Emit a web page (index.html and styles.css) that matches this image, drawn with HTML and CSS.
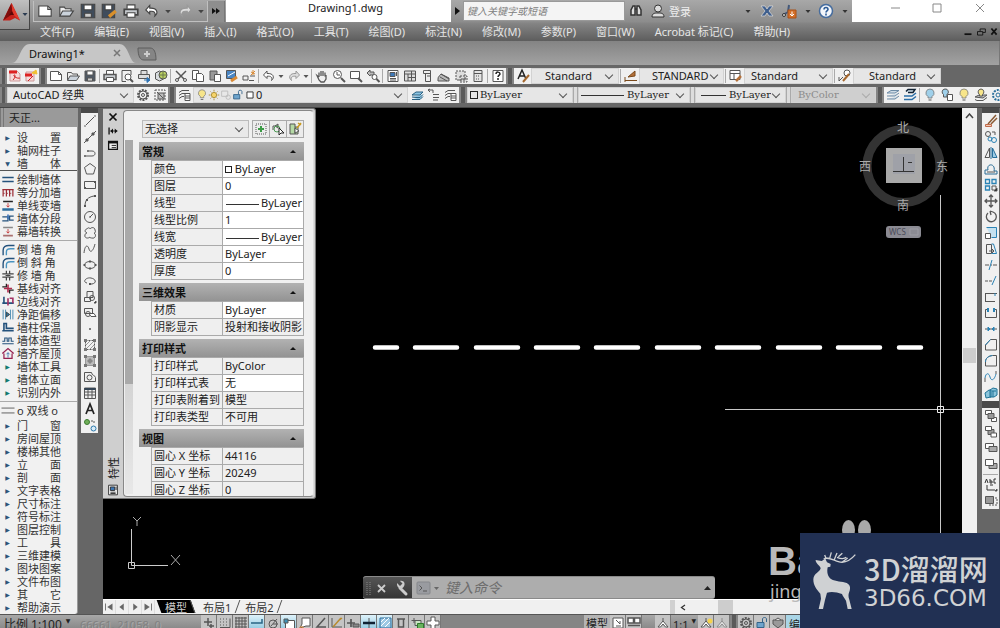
FILE: index.html
```html
<!DOCTYPE html>
<html lang="zh-CN">
<head>
<meta charset="utf-8">
<title>Drawing1.dwg</title>
<link rel="stylesheet" href="styles.css">
</head>
<body>
<header class="head">
  <button class="app" aria-label="应用程序菜单">
    <svg width="30" height="30" viewBox="0 0 30 30"><path d="M11.500 3 20 20.500 15 18 10 20.500 3 20.500z" fill="#c3221c"/><path d="M11.500 3 12.500 14 3 20.500z" fill="#7e0d0c"/><path d="M11.500 3 20 20.500 12.500 14z" fill="#e23a2c"/><path d="M9 15h5l-2-4z" fill="#5d0808"/><path d="M22.500 13h5l-2.500 3z" fill="#2a3b50"/></svg>
  </button>
  <div class="titlebar">
    <div class="quick" data-icons="new open saveD saveAs print undo caret redo caret" data-size="large"></div>
    <button class="more" aria-label="更多"><svg width="10" height="8" viewBox="0 0 10 8"><path d="M1 1l4 3-4 3zM5 1l4 3-4 3z" fill="#111"/></svg></button>
    <div class="title">Drawing1.dwg</div>
    <button class="go" aria-label="展开"><svg width="5" height="8" viewBox="0 0 5 8"><path d="M0 0l5 4-5 4z" fill="#111"/></svg></button>
    <input class="search" type="text" placeholder="键入关键字或短语" aria-label="搜索">
    <div class="infos" data-icons="binoc user"></div>
    <a class="login" href="#">登录</a>
    <div class="infos" data-icons="caret exchange cloud caret helpRound caret"></div>
    <div class="win" data-icons="wmin wmax wclose"></div>
  </div>
  <nav class="menu">
    <button>文件(F)</button><button>编辑(E)</button><button>视图(V)</button><button>插入(I)</button><button>格式(O)</button><button>工具(T)</button><button>绘图(D)</button><button>标注(N)</button><button>修改(M)</button><button>参数(P)</button><button>窗口(W)</button><button>Acrobat 标记(C)</button><button>帮助(H)</button>
    <span class="docwin" data-icons="dmin dmax dclose" data-size="slim"></span>
  </nav>
</header>
<div class="tabs">
  <button class="tab">
    <svg class="tabshape" viewBox="0 0 126 20" preserveAspectRatio="none"><path d="M0 20C8 20 8 1 18 1H109C119 1 119 20 126 20z" fill="#c6c6c6"/></svg>
    <span>Drawing1*</span>
    <svg width="8" height="8" viewBox="0 0 8 8"><path d="M1 1l6 6M7 1L1 7" stroke="#777" stroke-width="1.500"/></svg>
  </button>
  <button class="plus" aria-label="新图形"><svg width="20" height="14" viewBox="0 0 20 14"><path d="M1 1h12c4 0 6 4 6 12H7C3 13 1 9 1 1z" fill="#858585" stroke="#5d5d5d"/><path d="M10 4v6M7 7h6" stroke="#ccc" stroke-width="2"/></svg></button>
</div>
<div class="bars">
  <div class="row">
    <i class="grip"></i>
    <div class="bar pdfs" data-icons="pdf pdf2"></div>
    <i class="grip"></i>
    <div class="bar" data-icons="new open save | print preview publish globe | cut copy paste match block | undo caret redo caret | pan zoomRt zoomWin zoomPrev | props design palettes sheet markup calc | help"></div>
    <i class="grip"></i>
    <div class="bar" data-icons="textA"></div>
    <label class="combo c-text"><select aria-label="文字样式"><option>Standard</option></select></label>
    <div class="bar" data-icons="| dim"></div>
    <label class="combo c-dim"><select aria-label="标注样式"><option>STANDARD</option></select></label>
    <div class="bar" data-icons="| tableS"></div>
    <label class="combo c-tab"><select aria-label="表格样式"><option>Standard</option></select></label>
    <div class="bar" data-icons="| leader"></div>
    <label class="combo c-lead"><select aria-label="多重引线样式"><option>Standard</option></select></label>
  </div>
  <div class="row">
    <i class="grip"></i>
    <label class="combo c-ws"><select aria-label="工作空间"><option>AutoCAD 经典</option></select></label>
    <div class="bar" data-icons="gear wsave"></div>
    <i class="grip"></i>
    <div class="bar" data-icons="layers"></div>
    <label class="combo c-layer"><span class="state" data-icons="bulb sun freeze lock square" data-size="slim"></span><select aria-label="图层"><option>0</option></select></label>
    <div class="bar layerbtns" data-icons="layCur layPrev layers"></div>
    <i class="grip"></i>
    <label class="combo serif c-color"><i class="box"></i><select aria-label="颜色"><option>ByLayer</option></select></label>
    <i class="gap"></i>
    <label class="combo serif c-lt"><i class="rule"></i><select aria-label="线型"><option>ByLayer</option></select></label>
    <i class="gap"></i>
    <label class="combo serif c-lw"><i class="rule short"></i><select aria-label="线宽"><option>ByLayer</option></select></label>
    <i class="gap"></i>
    <label class="combo serif c-plot"><select aria-label="打印样式" disabled><option>ByColor</option></select></label>
    <i class="grip"></i>
    <div class="bar rest" data-icons="layStack laySwap | bulbB bulbBox bulb bulbLay gearB"></div>
  </div>
</div>
<main class="main">
  <aside class="side">
    <h2>天正...</h2>
    <ul>
      <li><b>▶</b><span>设<i></i>置</span></li><li><b>▶</b><span>轴网柱子</span></li><li><b>▼</b><span>墙<i></i>体</span></li>
    </ul>
    <ul class="icons">
      <li data-glyph="tWall"><span>绘制墙体</span></li><li data-glyph="tDiv"><span>等分加墙</span></li><li data-glyph="tLine"><span>单线变墙</span></li><li data-glyph="tSeg"><span>墙体分段</span></li><li data-glyph="tCurt"><span>幕墙转换</span></li>
    </ul>
    <ul class="icons">
      <li data-glyph="tArc"><span>倒 墙 角</span></li><li data-glyph="tArc"><span>倒 斜 角</span></li><li data-glyph="tCross"><span>修 墙 角</span></li><li data-glyph="tCrossR"><span>基线对齐</span></li><li data-glyph="tEdge"><span>边线对齐</span></li><li data-glyph="tGap"><span>净距偏移</span></li><li data-glyph="tCol"><span>墙柱保温</span></li><li data-glyph="tShape"><span>墙体造型</span></li><li data-glyph="tHouse"><span>墙齐屋顶</span></li>
      <li class="teal"><b>▶</b><span>墙体工具</span></li><li class="teal"><b>▶</b><span>墙体立面</span></li><li class="teal"><b>▶</b><span>识别内外</span></li>
    </ul>
    <ul class="dbl">
      <li data-glyph="tDouble"><span>o 双线 o</span></li>
    </ul>
    <ul class="plain">
      <li><b>▶</b><span>门<i></i>窗</span></li><li><b>▶</b><span>房间屋顶</span></li><li><b>▶</b><span>楼梯其他</span></li><li><b>▶</b><span>立<i></i>面</span></li><li><b>▶</b><span>剖<i></i>面</span></li><li><b>▶</b><span>文字表格</span></li><li><b>▶</b><span>尺寸标注</span></li><li><b>▶</b><span>符号标注</span></li><li><b>▶</b><span>图层控制</span></li><li><b>▶</b><span>工<i></i>具</span></li><li><b>▶</b><span>三维建模</span></li><li><b>▶</b><span>图块图案</span></li><li><b>▶</b><span>文件布图</span></li><li><b>▶</b><span>其<i></i>它</span></li><li><b>▶</b><span>帮助演示</span></li>
    </ul>
  </aside>
  <div class="vbar draw" data-icons="line cline pline polygon rect arc circle revcloud spline ellipse earc insert mkblock point hatch grad region table mtext addsel"></div>
  <section class="work">
    <div class="view">
      <div class="canvas">
        <svg class="drawing" width="859" height="491" viewBox="103 108 859 491">
          <path d="M375 347.500h22M415 347.500h42M476 347.500h42M536 347.500h42M596 347.500h42M657 347.500h42M717 347.500h42M778 347.500h42M838 347.500h42M899 347.500h22" stroke="#fff" stroke-width="4.500" stroke-linecap="round"/>
          <path d="M725 409.500H962M940.500 195V540" stroke="#c8c8c8"/>
          <path d="M937.500 406.500h6v6h-6z" stroke="#eee" fill="none"/>
          <path d="M131.500 529V565.500H168M128.500 562.500h6v6h-6z" stroke="#ccc" fill="none"/>
          <path d="M133 517l4 4 4-4M137 521v5M171 555l9 10M180 555l-9 10" stroke="#aaa" fill="none"/>
          <circle cx="903.500" cy="166" r="36.500" stroke="#333" stroke-width="9" fill="none"/>
          <path d="M886 148h36v35h-36z" fill="#a9a9a9"/><path d="M893 154h22v20h-22z" fill="#9fa1a8"/>
          <path d="M903.500 157v15M893 171.500h21M908 162.500h4" stroke="#333" fill="none"/>
          <rect x="886" y="226" width="35" height="12" rx="3" fill="#8b8b93"/>
          <path d="M910 229h8v6h-8z" fill="none" stroke="#9c9ca4"/>
          <g class="compass"><text x="903" y="132">北</text><text x="903" y="210">南</text><text x="865" y="171">西</text><text x="942" y="171">东</text></g>
          <text x="889" y="235" class="wcs">WCS</text>
        </svg>
        <section class="palette">
          <div class="strip">
            <span data-glyph="px"></span><span data-glyph="pauto"></span><span data-glyph="pmenu"></span>
            <em>特性</em><span data-glyph="props"></span>
          </div>
          <div class="pbody">
            <div class="pscroll"></div>
            <div class="pmain">
              <div class="pick">
                <label class="combo"><select aria-label="选择"><option>无选择</option></select></label>
                <span class="pbtns" data-icons="pAdd pSel pQuick"></span>
              </div>
              <button class="sec">常规</button>
              <table>
                <tr><th>颜色</th><td class="w"><i class="box"></i> ByLayer</td></tr>
                <tr><th>图层</th><td class="w">0</td></tr>
                <tr><th>线型</th><td class="w"><i class="rule"></i>ByLayer</td></tr>
                <tr><th>线型比例</th><td class="w">1</td></tr>
                <tr><th>线宽</th><td class="w"><i class="rule"></i>ByLayer</td></tr>
                <tr><th>透明度</th><td class="w">ByLayer</td></tr>
                <tr><th>厚度</th><td class="w">0</td></tr>
              </table>
              <button class="sec">三维效果</button>
              <table>
                <tr><th>材质</th><td class="w">ByLayer</td></tr>
                <tr><th>阴影显示</th><td>投射和接收阴影</td></tr>
              </table>
              <button class="sec">打印样式</button>
              <table>
                <tr><th>打印样式</th><td>ByColor</td></tr>
                <tr><th>打印样式表</th><td class="w">无</td></tr>
                <tr><th>打印表附着到</th><td>模型</td></tr>
                <tr><th>打印表类型</th><td>不可用</td></tr>
              </table>
              <button class="sec">视图</button>
              <table>
                <tr><th>圆心 X 坐标</th><td>44116</td></tr>
                <tr><th>圆心 Y 坐标</th><td>20249</td></tr>
                <tr><th>圆心 Z 坐标</th><td>0</td></tr>
              </table>
            </div>
          </div>
        </section>
        <form class="cmd">
          <span class="cmdl"><svg width="48" height="22" viewBox="0 0 48 22"><path d="M4 5v13M7 5v13" stroke="#888" stroke-dasharray="1 1"/><path d="M15 8l7 7M22 8l-7 7" stroke="#ccc" stroke-width="1.800"/><path d="M37 11l6 6" stroke="#ccc" stroke-width="3" stroke-linecap="round"/><path d="M34 6l3 3 2.500-2.500L37 4c4-1 6 3 3.500 6s-7 1-6.500-4z" fill="#ccc"/></svg></span>
          <span class="cmdp"><svg width="24" height="16" viewBox="0 0 24 16"><rect x="1" y="2" width="13" height="12" rx="1" fill="#999ba0" stroke="#85878b"/><path d="M3.500 5.500L6 8l-2.500 2.500M7 11h4" stroke="#555" fill="none"/><path d="M18 7h5l-2.500 3z" fill="#666"/></svg></span>
          <input type="text" placeholder="键入命令" aria-label="命令">
          <svg class="up" width="7" height="4" viewBox="0 0 7 4"><path d="M0 4l3.500-4L7 4z" fill="#222"/></svg>
        </form>
      </div>
      <div class="vscroll"><svg width="9" height="6" viewBox="0 0 9 6"><path d="M1 5l3.500-4L8 5" stroke="#444" stroke-width="1.500" fill="none"/></svg><i></i></div>
    </div>
    <div class="layouts">
      <span class="nav" data-icons="first prev next last" data-size="slim"></span>
      <button class="lt on">模型</button><button class="lt">布局1</button><button class="lt">布局2</button>
      <div class="hscroll"><svg width="6" height="7" viewBox="0 0 6 7"><path d="M5 1L1.500 3.500 5 6" stroke="#333" stroke-width="1.300" fill="none"/></svg><i></i></div>
    </div>
  </section>
  <div class="right">
    <div class="vbar" data-icons="erase copyO mirror offset array move rotate scale stretch trim extend brkpt brk join chamfer fillet blend explode"></div>
    <div class="vbar order" data-icons="front back above under - textFront hatchBack"></div>
  </div>
</main>
<footer class="status">
  <div class="ratio"><span>比例 1:100</span><b>▼</b></div>
  <span class="coords">66661, 21058, 0</span>
  <div class="sb" data-icons="sInfer sSnap sGrid sOrtho sPolar sOsnap s3d sTrack sUcs sDyn sLwt sTpy sQp sSc sPlus"></div>
  <span class="sp"></span>
  <button class="model">模型</button>
  <div class="sb" data-icons="sLay sView"></div>
  <div class="sb scales" data-icons="sAnno"></div>
  <span class="one">1:1<b>▼</b></span>
  <div class="sb" data-icons="sAnnoY sAnnoG"></div>
  <i class="grip"></i>
  <div class="sb" data-icons="gear lock sShield"></div>
  <span class="edit">编辑</span>
</footer>
<div class="baidu"><i></i><i></i><strong>Ba</strong><span>jing</span></div>
<div class="mark">
  <svg width="45" height="60" viewBox="455 150 135 180"><path d="M466 180L484 183 495 176 500 187 511 192 510 200 502 202C499 217 502 230 512 237 526 246 546 243 559 249 569 254 571 262 568 272 564 282 563 287 567 299L574 327H562L557 302C552 294 547 288 545 282 530 277 515 274 500 278L494 300 488 327H475L482 296 480 281C468 268 459 256 459 238 460 220 479 216 481 205 479 196 470 194 466 183z" fill="#cfd1d3"/><path d="M490 178C500 168 518 180 534 185 554 191 573 178 585 164M508 175L513 157M521 181L530 159M497 175L493 165M530 172C540 176 550 178 558 172M534 170L546 160M545 187L562 174" stroke="#cfd1d3" stroke-width="4" fill="none"/></svg>
  <div><strong>3D溜溜网</strong><span>3D66.COM</span></div>
</div>
<script src="app.js"></script>
</body>
</html>
```

FILE: styles.css
```css
* { box-sizing: border-box; }
body { margin: 0; height: 100vh; overflow: hidden; display: flex; flex-direction: column; background: #666; color: #333; font: 11px/13px "Noto Sans", "Noto Sans CJK SC", sans-serif; }
button, input, select { font: inherit; color: inherit; border: 0; padding: 0; margin: 0; background: none; border-radius: 0; }
svg { display: block; flex: none; }
.ib { width: 17px; height: 16px; flex: none; display: flex; align-items: center; justify-content: center; color: #565656; overflow: hidden; }
.ib.narrow { width: 8px; }
.sep { display: block; flex: none; width: 1px; height: 14px; margin: 0 1px; background: #aaa; }

.head { display: grid; grid-template-columns: 30px minmax(0, 1fr); grid-template-rows: 22px 19px; background: linear-gradient(#a8a8a8, #8c8c8c 22px, #858585 23px, #5d5d5d 41px); }
.app { grid-row: 1 / 3; height: 30px; align-self: start; background: linear-gradient(#c0c0c0, #8f8f8f); border: solid #444; border-width: 0 1px 1px 0; }
.titlebar { display: flex; align-items: center; min-width: 0; }
.quick { display: flex; align-items: center; height: 21px; margin-left: 3px; border: 1px solid #c0c0c0; border-top: 0; width: 175px; padding: 0 1px; justify-content: space-between; }
.quick .ib { width: 20px; height: 20px; color: #444; }
.quick .ib.narrow { width: 10px; }
.more { width: 17px; height: 21px; display: grid; place-items: center; background: #8e8e8e; border-right: 1px solid #777; }
.title { flex: 1; align-self: stretch; background: #fff; color: #222; text-align: center; line-height: 16px; padding-left: 14px; margin-left: 1px; }
.go { width: 12px; display: grid; place-items: center; }
.search { width: 162px; height: 20px; background: #f4f4f4; border: 1px solid #999; font-style: italic; font-size: 10px; padding: 0 3px; }
.search::placeholder { color: #808080; opacity: 1; }
.infos { display: flex; align-items: center; }
.infos .ib { width: 22px; height: 20px; color: #333; }
.infos .ib.narrow { width: 14px; }
.login { color: #eee; text-decoration: none; width: 72px; }
.login + .infos { width: 111px; justify-content: space-between; }
.win { align-self: stretch; width: 148px; background: #fff; display: flex; justify-content: space-between; padding: 0 12px 6px 34px; align-items: center; }
.win .ib { color: #888; }
.menu { display: flex; gap: 20px; padding-left: 10px; align-items: center; color: #e6e6e6; white-space: nowrap; }
.docwin { margin-left: auto; display: flex; }
.docwin .ib { width: 13px; color: #111; }

.tabs { display: flex; height: 24px; align-items: flex-end; padding: 0 0 2px 12px; background: linear-gradient(#848484, #a2a2a2); border-right: 1px solid #777; }
.tab { position: relative; width: 124px; height: 20px; display: flex; align-items: center; justify-content: space-between; padding: 0 15px 0 17px; color: #111; }
.tab > * { position: relative; }
.tab .tabshape { position: absolute; inset: 0; width: 100%; height: 100%; }
.plus { height: 18px; margin-left: 1px; }

.bars { background: #676767; padding: 3px 0 4px; display: flex; flex-direction: column; gap: 3px; border-bottom: 1px solid #444; }
.row { display: flex; height: 16px; }
.grip { flex: none; width: 8px; background: #5a5a5a; border: solid #858585; border-width: 0 2px; }
.row > .grip:first-child { width: 7px; }
.bar { display: flex; align-items: center; background: #f0f0f0; flex: none; }
.pdfs .ib { width: 16px; }
.gap { flex: none; width: 5px; background: #ddd; border: solid #aaa; border-width: 0 1px; }
.combo { position: relative; display: flex; align-items: center; background: #e6e6e6; border: 1px solid #d2d2d2; flex: none; overflow: hidden; color: #222; }
.combo select { appearance: none; flex: 1; min-width: 0; padding-right: 14px; height: 14px; line-height: 14px; opacity: 1; }
.combo::after { content: ""; position: absolute; right: 6px; top: 3px; width: 5px; height: 5px; border: solid #555; border-width: 0 1px 1px 0; transform: rotate(45deg); }
.c-text { width: 88px; padding-left: 13px; }
.c-dim { width: 85px; padding-left: 12px; }
.c-tab { width: 89px; padding-left: 6px; }
.c-lead { width: 88px; padding-left: 15px; }
.c-ws { width: 127px; padding-left: 5px; }
.c-layer { width: 215px; }
.c-layer .state { display: flex; padding-left: 2px; }
.c-layer .ib { width: 12px; }
.serif { font-family: "DejaVu Serif", serif; font-size: 10px; }
.c-color { width: 106px; padding-left: 2px; }
.box { flex: none; display: inline-block; width: 8px; height: 8px; border: 1px solid #222; margin-right: 2px; }
.rule { flex: none; display: inline-block; height: 1px; width: 43px; background: #333; margin-right: 3px; }
.rule.short { width: 25px; }
.c-lt { width: 112px; padding-left: 2px; }
.c-lw { width: 91px; padding-left: 5px; }
.c-plot { width: 85px; padding-left: 6px; color: #8b8b8b; background: #cfcfcf; }
.c-plot::after { border-color: #aaa; }
.rest { flex: 1; overflow: hidden; min-width: 0; }

.main { flex: 1; min-height: 0; display: flex; }
.side { width: 78px; flex: none; background: #f1f1f1; border-radius: 0 0 3px 0; overflow: hidden; border-right: 1px solid #999; }
.side h2 { margin: 0; font: inherit; height: 19px; line-height: 19px; background: #9a9a9a; padding-left: 5px; border-left: 4px double #777; color: #222; }
.side ul { list-style: none; margin: 0; padding: 2px 0; border-bottom: 1px solid #aaa; }
.side h2 + ul { padding: 4px 0 0; border-color: #555; }
.side .plain, .side .dbl { border: 0; }
.side .plain { padding: 0; }
.side li { display: flex; align-items: center; height: 13px; gap: 1px; white-space: nowrap; }
.side li svg { width: 16px; height: 13px; }
.side b { width: 16px; text-align: center; font: 6px/13px "DejaVu Sans", sans-serif; color: #2c5579; padding-right: 1px; }
.side .teal b { color: #127a70; }
.side span { width: 46px; display: flex; white-space: pre; }
.side span i { flex: 1; max-width: 22px; }

.vbar { width: 17px; flex: none; align-self: flex-start; background: #f0f0f0; border-top: 5px solid #4a4a4a; }
.vbar .ib { width: 17px; }
.vbar .sep { width: 15px; height: 1px; margin: 2px 1px; }
.draw { margin: 0 5px 0 3px; }
.right { margin-left: 5px; width: 18px; flex: none; }
.right .order { border-top-width: 7px; }
.work { flex: 1; min-width: 0; display: flex; flex-direction: column; }
.view { flex: 1; min-height: 0; display: flex; }
.canvas { flex: 1; min-width: 0; background: #000; position: relative; overflow: hidden; }
.compass { font: 12px "Noto Sans CJK SC", sans-serif; fill: #aaa; text-anchor: middle; }
.wcs { font: 8px "Noto Sans", sans-serif; fill: #4a4a58; }
.vscroll { width: 15px; background: #f0f0f0; display: flex; flex-direction: column; align-items: center; padding-top: 5px; }
.vscroll i { width: 13px; height: 15px; background: #cdcdcd; margin-top: 229px; }

.palette { position: absolute; left: 0; top: 0; width: 213px; height: 391px; background: #cfcfcf; border: solid #777; border-width: 1px 1px 1px 0; display: flex; border-radius: 0 3px 3px 0; padding: 1px 1px 1px 0; }
.strip { width: 20px; display: flex; flex-direction: column; align-items: center; color: #222; }
.strip svg { height: 14px; }
.strip em { font-style: normal; writing-mode: vertical-rl; text-orientation: sideways; transform: rotate(180deg); margin-top: auto; margin-bottom: 4px; }
.pbody { flex: 1; min-width: 0; display: flex; background: #f0f0f0; border: 1px solid #888; border-right-color: #ddd; border-radius: 4px; overflow: hidden; }
.pscroll { width: 8px; flex: none; margin: 29px 0 2px 1px; background: linear-gradient(#a9a9a9 244px, #d4d4d4 244px, #e8e8e8); }
.pmain { width: 165px; margin-left: 6px; padding-top: 9px; }
.pick { display: flex; justify-content: space-between; padding-left: 3px; margin-bottom: 4px; height: 18px; }
.pick .combo { width: 107px; border-color: #bbb; padding-left: 2px; background: #e9e9e9; }
.pick .combo::after { top: 4px; }
.pbtns { display: flex; }
.pbtns .ib { width: 18px; height: 18px; border: 1px solid #aaa; margin-left: -1px; background: #ececec; }
.sec { display: flex; width: 100%; height: 18px; align-items: center; justify-content: space-between; background: linear-gradient(#b2b2b2, #939393); font-weight: bold; color: #111; padding: 0 8px 0 3px; }
.sec::after { content: ""; border: 3px solid transparent; border-bottom-color: #111; border-top: 0; }
table { border-collapse: collapse; table-layout: fixed; width: 153px; margin: 0 0 3px 12px; }
tr { height: 17px; }
th, td { font-weight: normal; text-align: left; padding: 0 0 0 2px; border: 1px solid #aaa; white-space: nowrap; overflow: hidden; line-height: 16px; color: #222; background: #efefef; }
th { width: 71px; }
td.w { background: #fff; }
td .rule { width: 33px; vertical-align: middle; margin: 0 2px 0 1px; }
td .box { margin: 0; width: 7px; height: 7px; }

.cmd { position: absolute; left: 260px; bottom: 0; width: 352px; height: 23px; display: flex; align-items: center; background: #adadad; margin: 0; border-radius: 3px; overflow: hidden; border: solid #8a8a8a; border-width: 1px 0; }
.cmdl { background: linear-gradient(#555, #353535); width: 49px; }
.cmdp { padding: 0 5px 0 4px; }
.cmd input { flex: 1; min-width: 0; font-style: italic; font-size: 14px; }
.cmd input::placeholder { color: #6c6c6c; opacity: 1; }
.up { margin-right: 4px; }
.layouts { height: 15px; display: flex; background: #f0f0f0; border-top: 1px solid #fff; overflow: hidden; }
.nav { display: flex; width: 53px; }
.nav .ib { width: 13px; height: 14px; border-right: 1px solid #ddd; color: #666; }
.lt { position: relative; z-index: 0; padding: 0 7px; height: 14px; }
.lt::before { content: ""; position: absolute; z-index: -1; inset: 0 0 1px; border-right: 1px solid #555; transform: skewX(-20deg); }
.lt.on { color: #ccc; margin: 0 3px; padding: 0 6px; }
.lt.on::before { background: #000; transform: skewX(20deg); }
.hscroll { margin-left: auto; width: 307px; border-left: 5px solid #d0d0d0; display: flex; align-items: center; padding-left: 5px; }
.hscroll i { width: 15px; height: 14px; background: #cdcdcd; margin-left: 32px; }

.status { height: 14px; display: flex; background: linear-gradient(#a8a8a8, #8a8a8a); border-top: 1px solid #555; overflow: hidden; color: #222; white-space: nowrap; line-height: 19px; }
.ratio { display: flex; padding-left: 4px; width: 80px; gap: 4px; font-size: 12px; }
.ratio b, .one b { font: 6px/12px "DejaVu Sans", sans-serif; }
.coords { color: #808080; width: 121px; text-shadow: 1px 1px #aaa; }
.sb { display: flex; flex: none; }
.sb .ib { width: 16px; height: 15px; border-right: 1px solid #777; background: #c4c4c4; }
.sb .ib.hot { background: linear-gradient(#def2fa, #8fc8e0); }
.sp { flex: 1; background: #858585; }
.model { width: 26px; height: 18px; line-height: 18px; background: #b4b4b4; }
.scales { margin-left: 13px; }
.one { display: flex; gap: 3px; width: 27px; padding-left: 2px; }
.edit { width: 214px; background: linear-gradient(90deg, #a9d5e6 60px, #999 60px); padding-left: 3px; }

.baidu { position: absolute; right: 0; bottom: 22px; width: 232px; height: 86px; color: #b9b9b9; font-family: "Liberation Sans", Arial, sans-serif; }
.baidu i { position: absolute; left: 74px; top: 0; width: 13px; height: 20px; background: #a9a9a9; border-radius: 50%; }
.baidu i + i { left: 90px; }
.baidu strong { display: block; font-size: 40px; line-height: 40px; padding-top: 21px; }
.baidu span { display: block; font: 18px/20px "Noto Sans", sans-serif; padding-left: 2px; }
.mark { position: absolute; right: 0; bottom: 0; width: 200px; height: 95px; background: #213053; color: #d0d2d4; display: flex; align-items: center; padding: 0 0 2px 12px; gap: 7px; }
.mark strong, .mark span { display: block; white-space: nowrap; }
.mark strong { font: 500 29px/36px "Noto Sans CJK SC", sans-serif; }
.mark span { font: 23px/24px "DejaVu Sans", sans-serif; }
```

FILE: app.js
```js
const arrow = (d) => `<path d="${d}" fill="currentColor" stroke="none"/>`;
const ppl = (d, c) => `<path d="${d}" stroke="${c}"/>`;
const bulb = (c) => `<path d="M8 2a4 4 0 0 1 2 7.500V11H6V9.500A4 4 0 0 1 8 2z" fill="${c}" stroke="#777" stroke-width=".8"/><path d="M6.500 13h3" />`;
const person = `<path d="M8 3v3M8 6L3 12h2.500L8 9l2.500 3H13L8 6" fill="#fff"/>`;
const G = {
  new: `<path d="M2.500 3.500h8l3 3v6h-11z" fill="#fff"/><path d="M10.500 3.500v3h3"/>`,
  open: `<path d="M2.500 12V4.500h4l1 1.500h5v2" fill="#eee"/><path d="M2.500 12.500l2.500-4.500h9.500l-3 4.500z" fill="#cbd3dc"/>`,
  save: `<path d="M3 3h10v10H3z" fill="#505a66"/><path d="M5 3h6v4H5z" fill="#fff"/><path d="M5.500 10h5v3h-5z" fill="#ccc"/>`,
  saveD: `<path d="M2 2h12v12H2z" fill="#3f4c5c"/><path d="M4.500 2.500h7V7h-7z" fill="#fff"/><path d="M5 10h6v3.500H5z" fill="#ccc"/>`,
  saveAs: `<path d="M2 2h11v12H2z" fill="#3f4c5c"/><path d="M4.500 2.500h6V7h-6z" fill="#fff"/><path d="M8 13l6-5" stroke="#d9902c" stroke-width="3"/>`,
  print: `<path d="M4.500 6V2.500h7V6" fill="#fff"/><path d="M2 6.500h12v5H2z" fill="#c8ccd0" stroke-width="1.500"/><path d="M4.500 9.500h7v4h-7z" fill="#fff"/>`,
  preview: `<path d="M3 2.500h9V7M3 2.500v11h4"/><circle cx="9" cy="9" r="3" fill="#fff"/><path d="M11 11l3 3" stroke-width="2"/>`,
  publish: `<path d="M5 6V2.500h6V6M2.500 6.500h11v4h-11z" fill="#ddd"/><path d="M8 12h5M11 9.500l3 2.500-3 2.500z" stroke="#2f74b5" fill="#2f74b5"/>`,
  globe: `<path d="M2.500 5l4-2 4 2v6l-4 2-4-2z" fill="#d8dcdf"/><circle cx="10" cy="7" r="4" fill="#b9cf62"/><path d="M10 3v8M6 7h8" stroke="#6c7b4d"/>`,
  cut: `<path d="M3 3l8 8M13 3l-8 8" stroke-width="1.500"/><circle cx="4" cy="12" r="1.500"/><circle cx="12" cy="12" r="1.500"/>`,
  copy: `<path d="M2.500 2.500h6v9h-6z" fill="#fff"/><path d="M6.500 5.500h5l2 2v6h-7z" fill="#fff"/>`,
  paste: `<path d="M3 3h7v9H3z" fill="#999"/><path d="M7.500 6.500h6v7h-6z" fill="#fff"/>`,
  match: `<path d="M2.500 2.500h9v8h-9z" fill="#4a86c4"/><path d="M4 8l7-4" stroke="#fff"/><path d="M7 13l6-4" stroke="#d88a36" stroke-width="3"/>`,
  block: `<path d="M2 8h5v4H2zM8 12.500h5M9 8h5" /><path d="M12 2v5M10 4l4 2M14 3l-4 4" stroke="#d88a36"/>`,
  undo: `<path d="M6 3L2.500 7 6 10.500V8.300c4-.5 5.500 1 4.500 4.200 3.500-3 2-7.500-4.500-7z" fill="#fff"/>`,
  redo: `<path d="M10 3l3.500 4-3.500 3.500V8.300c-4-.5-5.500 1-4.500 4.200C2 9.500 3.500 5 10 5.500z" stroke="#999" fill="#ddd"/>`,
  caret: arrow('M5.500 7h5L8 10z'),
  pan: `<path d="M5 9V4.500M7 8V3M9 8V3M11 8.500V4.500M5 9L3 7.500 5 12l2 2h3l2-3V7" stroke-width="1.300"/>`,
  zoomRt: `<circle cx="6.500" cy="6.500" r="4" fill="#fff"/><path d="M10 10l4 4" stroke-width="2"/><path d="M6 4v3h3"/>`,
  zoomWin: `<path d="M2.500 3.500h9v7h-9z" fill="#fff"/><path d="M10 10l4 4" stroke-width="2"/>`,
  zoomPrev: `<path d="M2 5l3-3v2h4v3H5v1z" fill="#bbb"/><circle cx="9.500" cy="9" r="2.500" fill="#fff"/><path d="M11.500 11l3 3" stroke-width="2"/>`,
  props: `<path d="M3 2.500h10v11H3z" fill="#fff"/><path d="M5 4.500h5v4H5z" fill="#3e79b8"/><path d="M5 10.500h6M5 12h6M11.500 4v4"/>`,
  design: `<path d="M2.500 3h11v10h-11zM2.500 6h11M6 6v7M9.500 3v10M6 9.500h7.500" fill="#ddd"/>`,
  palettes: `<path d="M4.500 2.500h7v11h-5v-8h-2zM6 5.500h5M8 8h3" fill="#eee"/>`,
  sheet: `<path d="M2 11c0-3 2-3 3-5l8 4v3H2z" fill="#bbb"/><path d="M5 6l8 5M4 9l7 4"/>`,
  markup: `<path d="M3 3h9v9H3zM7 8h7v6H7z" stroke-dasharray="2 1" fill="#ddd"/><path d="M8 11h5"/>`,
  calc: `<path d="M4 2.500h8v11H4zM4 5.500h8" fill="#e4e4e4"/><path d="M6 8h4M6 11h4" stroke-dasharray="1 1"/>`,
  help: `<path d="M3 2.500h10v11H3z" fill="#fff"/><path d="M6 6c0-3 4-2 4 0 0 1-2 1.500-2 3M8 10v2" stroke="#222" stroke-width="1.500"/>`,
  pdf: `<path d="M3 3h7l3 3v7H3z" fill="#f6dada" stroke="#c99"/><path d="M2 4h8" stroke="#d22" stroke-width="3"/><path d="M6 12c3-3 2-6 1-5s3 4 6 3" stroke="#c22"/>`,
  pdf2: `<path d="M3 4h8v9H3z" fill="#f6dada" stroke="#c99"/><path d="M2 7h7" stroke="#d22" stroke-width="3"/><path d="M9 5l4-3 1 4z" fill="#f0c030" stroke="#f0c030"/><path d="M5 13l5-5" stroke="#c22"/>`,
  textA: `<path d="M3 11L7 2l4 9M4.500 8h5" stroke="#222" stroke-width="1.500"/><path d="M8 14l6-7" stroke="#a5672d" stroke-width="2"/>`,
  dim: `<path d="M2 12.500h12M2 9v5M12 3L5 9l7-1z" stroke="#7a4a1c" fill="#b5713a"/>`,
  tableS: `<path d="M2 2.500h10v9H2zM2 5.500h10M6 5v6" fill="#fff"/><path d="M8 13l5-5" stroke="#b5713a" stroke-width="2.500"/>`,
  leader: `<path d="M2 13l4-4M2 13V9"/><circle cx="10" cy="5" r="3" fill="#fff"/><path d="M6 13l6-7" stroke="#a5672d" stroke-width="2"/>`,
  gear: `<circle cx="8" cy="8" r="5" stroke-width="2" stroke-dasharray="2 1.100"/><circle cx="8" cy="8" r="4"/><circle cx="8" cy="8" r="1.500"/>`,
  gearB: `<circle cx="8" cy="8" r="5" stroke="#2a6f9c" stroke-width="2" stroke-dasharray="2 1.100"/><circle cx="8" cy="8" r="2" stroke="#2a6f9c"/>`,
  wsave: `<path d="M3 3h10v10H3z" stroke-dasharray="2 1"/><path d="M5 5l6 6M6 6h6v6H6z" fill="#bbb"/>`,
  layers: `<path d="M2 5.500l3-2h7M2 8.500l3-2h4M2 11.500l3-2h2"/><path d="M8 6.500h5v7H8zM8 9h5M8 11h5" fill="#fff"/>`,
  bulb: bulb('#f7e58a'), bulbB: bulb('#9fd0ea'),
  bulbBox: `<path d="M6 2a3 3 0 0 1 2 5.500V10H4.500V7.500A3 3 0 0 1 6 2z" fill="#9fd0ea"/><path d="M8.500 7.500h5v6h-5z" fill="#fff"/>`,
  bulbLay: `<path d="M2 10l4-2h8l-4 3z" fill="#bbb"/><path d="M2 12.500l2 1h6l4-3"/><path d="M8 2a3 3 0 0 1 1.500 5.500V9h-3V7.500A3 3 0 0 1 8 2z" fill="#f7e58a"/>`,
  sun: `<circle cx="8" cy="8" r="3" fill="#f7d56a" stroke="#a98a2c"/><path d="M8 2v2M8 12v2M2 8h2M12 8h2M4 4l1 1M12 4l-1 1M4 12l1-1M12 12l-1-1" stroke="#a98a2c"/>`,
  freeze: `<path d="M3 3.500h7v6H3z" fill="#e8e8e8" stroke="#bbb"/><circle cx="10.500" cy="10.500" r="2.500" stroke="#bbb"/>`,
  lock: `<path d="M3 7.500h7v5H3z" fill="#6ea4cc" stroke="#34648a"/><path d="M8.500 7V4c0-2 4-2 4 0v3" stroke="#34648a"/>`,
  square: `<path d="M4.500 4.500h7v7h-7z" fill="#fff" stroke="#222"/>`,
  layCur: `<path d="M3 8l4-3h7l-3 3zM3 10l4 .5h4l3-3M3 12.500h8l3-3" fill="#8cc5e4" stroke="#2a6080"/>`,
  layPrev: `<path d="M7 7.500h6M7 10.500h6M7 13h5M2 3h5v3M4 2L2 3l2 2" />`,
  layStack: `<path d="M2 6l4-2.500h8L10 6zM2 9h8l4-3M2 12h8l4-3" stroke="#6d8ba6" fill="#cfdce6"/>`,
  laySwap: `<path d="M4 4.500l2-2h7l-2 3H6" stroke="#123" stroke-width="1.500" fill="#cfe2ee"/><path d="M2 9h8l4-3M2 12.500h8l4-3" stroke="#2a6fa8" stroke-width="1.500"/>`,
  binoc: `<path d="M3 12V7l2-4h2v9zM9 12V3h2l2 4v5zM7 6h2" fill="#ddd" stroke-width="1.500"/>`,
  user: `<circle cx="8" cy="5.500" r="3.500" fill="#ddd"/><path d="M2 14c0-4 3-4 6-4s6 0 6 4z" fill="#ddd"/>`,
  exchange: `<path d="M2 3h4l2 3 2-3h4l-4 5 4 5h-4l-2-3-2 3H2l4-5z" fill="#3f5f8e" stroke="#ddd" stroke-width=".7"/>`,
  cloud: `<path d="M2 12l5-3 1-7" stroke="#44597a" stroke-width="2"/><circle cx="3" cy="12" r="1.500" fill="#ddd"/><path d="M7 7h8v8H7z" fill="#d4702a" stroke="#a95016"/><path d="M11 8.500v4M9 11l2 2 2-2" stroke="#fff"/>`,
  helpRound: `<circle cx="8" cy="8" r="6.500" fill="#f2f5fa" stroke="#456c9e" stroke-width="1.500"/><path d="M6 6.500c0-3 4-2.500 4 0 0 1-2 1.200-2 3M8 10.500v2" stroke="#2c5b96" stroke-width="1.600"/>`,
  wmin: `<path d="M4 8h9"/>`, wmax: `<path d="M4 4h8v8H4z"/>`, wclose: `<path d="M4 4l8 8M12 4l-8 8"/>`,
  dmin: `<path d="M4 10.500h8" stroke-width="2"/>`, dmax: `<path d="M4 7.500h6v4H4zM7 7V4.500h6v4h-3"/>`, dclose: `<path d="M5 4l6 7M11 4l-6 7" stroke-width="2"/>`,
  px: `<path d="M4 4l8 8M12 4l-8 8" stroke="#111" stroke-width="2"/>`,
  pauto: `<path d="M3.500 4v8" stroke="#111" stroke-width="1.500"/><path d="M5 8l3-3v6zM13 8l-3-3v6zM5 8h8" fill="#111" stroke="none"/><path d="M5 8h8" stroke="#111"/>`,
  pmenu: `<path d="M3 4h10v9H3z" fill="#eee" stroke="#111" stroke-width="1.500"/><path d="M3 5h10" stroke="#111" stroke-width="2.500"/><path d="M6.500 8.500h5M6.500 11h5" stroke="#111"/>`,
  pAdd: `<path d="M3 3h10v10H3z" stroke-dasharray="1 1"/><path d="M8 5v6M5 8h6" stroke="#3c9b46" stroke-width="2"/>`,
  pSel: `<path d="M3 9V5h5M5 5l3-2v4z" /><circle cx="7" cy="8" r="3" stroke="#4d9a54"/><path d="M9 7v7l2-2h3z" fill="#fff" stroke="#222"/>`,
  pQuick: `<path d="M3 3h5v10H3zM8 6h3v7H8" fill="#b5d9a5"/><path d="M10 7l4-5M11 2l3 2" stroke="#c99b22" stroke-width="1.500"/><path d="M8 7v5l4-2z" fill="#fff"/>`,
  line: `<path d="M3.500 12.500l9-9"/><path d="M2 12h2v2H2zM12 2h2v2h-2z" fill="#aaa" stroke="none"/>`,
  cline: `<path d="M2 14L14 2"/><path d="M4 10h2v2H4zM10 4h2v2h-2z" fill="#555"/>`,
  pline: `<path d="M3 11h7c4 0 4-5 0-5H6"/><path d="M2 10h2v2H2zM5 5h2v2H5z" fill="#777" stroke="none"/>`,
  polygon: `<path d="M8 2.500l5.500 4-2 6.500h-7l-2-6.500z"/>`,
  rect: `<path d="M2.500 4.500h11v7h-11z"/><path d="M2 10h2v2H2zM12 4h2v2h-2z" fill="#555" stroke="none"/>`,
  arc: `<path d="M3 13c0-6 3-9 9-10"/><path d="M2 12h2v2H2zM4 6h2v2H4zM12 2h2v2h-2z" fill="#555" stroke="none"/>`,
  circle: `<circle cx="8" cy="8" r="5.500"/><path d="M8 8l3-3M7 8h2"/>`,
  revcloud: `<path d="M5 4c1-2 3-1 3 0 1-2 5-2 5 1 1 2 0 3-1 3 3 2 1 6-2 5-1 0-2 0-2-1-2 2-6 1-5-2 0-1 1-2 2-2-3-1-2-4 0-4z"/>`,
  spline: `<path d="M2 12c1-9 4-8 5-4s4 3 6-5"/>`,
  ellipse: `<ellipse cx="8" cy="8" rx="5.500" ry="3.500"/><path d="M2.500 7v2M13.500 7v2M7 4.500h2M7 11.500h2" stroke-width="2"/>`,
  earc: `<path d="M5 10c-5-1-1-6 4-5s6 5 1 6H8"/><path d="M8 10v2" stroke-width="2"/>`,
  insert: `<path d="M5 2.500h6v6H5zM2.500 8.500h6v4h-6z"/><circle cx="10" cy="9" r="2.500"/><path d="M12 14h2v-2z" fill="#111"/>`,
  mkblock: `<path d="M2.500 3.500h8v5h-8z"/><circle cx="6" cy="9" r="2.500"/><path d="M7 8.500h5l2 3H9z" fill="#fff"/>`,
  point: `<path d="M7.500 7.500h1v1h-1z"/>`,
  hatch: `<path d="M3.500 3.500h9v9h-9z" stroke-dasharray="2 1"/><path d="M4 8l4-4M4 12l8-8M8 12l4-4" stroke="#999"/><path d="M2 2h3v3H2zM11 2h3v3h-3zM2 11h3v3H2zM11 11h3v3h-3z" fill="#777" stroke="none"/>`,
  grad: `<path d="M3.500 3.500h9v9h-9z" fill="#bbb" stroke="#999"/><path d="M5 8l3-3 3 3-3 3z" fill="#888" stroke="none"/><path d="M2 2h3v3H2zM11 2h3v3h-3zM2 11h3v3H2zM11 11h3v3h-3z" fill="#777" stroke="none"/>`,
  region: `<path d="M2.500 12.500v-9h7c0 3 4 3 4 5v4z"/><circle cx="7.500" cy="8.500" r="2.500"/>`,
  table: `<path d="M2.500 3h11v10.500h-11zM2.500 7h11M2.500 10h11M6 4v9M10 4v9"/><path d="M2.500 4h11" stroke="#345" stroke-width="2"/>`,
  mtext: `<path d="M4 13L8 3l4 10M5.500 9.500h5" stroke="#222" stroke-width="1.700"/>`,
  addsel: `<circle cx="5" cy="5" r="2.500" fill="#6fae58" stroke="#3b7a30"/><circle cx="11.500" cy="11.500" r="2.500" fill="#d9ecf8" stroke="#2b78ab"/><path d="M9 4h3v3" stroke-dasharray="2 1"/>`,
  erase: `<path d="M5 11L13 2M8 11l6-6" stroke="#8a5a34" stroke-width="1.500"/><path d="M2.500 11.500h6v2h-6z" fill="#f3c9b4" stroke="#c06a4a"/>`,
  copyO: `<circle cx="5" cy="5" r="2.500"/><circle cx="11" cy="11" r="2.500" stroke="#2b83b5"/><circle cx="7" cy="10" r="2" stroke="#2b83b5"/><path d="M9 3h3v3"/>`,
  mirror: `<path d="M6.500 3v9.500H2z"/><path d="M9.500 3v9.500H14z" fill="#9ccbe5" stroke="#276f9b"/><path d="M8 2v12" stroke="#276f9b"/>`,
  offset: `<path d="M2 13h12v-3h-3c2-8-8-8-6-1H2z" stroke="#2a6d95" /><path d="M4 11h8"/>`,
  array: `<path d="M2.500 2.500h4v4h-4zM9 2.500h4v4H9zM2.500 9h4v4h-4z" stroke="#2b83b5" stroke-width="1.300"/><path d="M9 9h4v4H9z"/><path d="M11 14h3v-3z" fill="#111"/>`,
  move: `<path d="M8 2v12M2 8h12M6 4l2-2 2 2M6 12l2 2 2-2M4 6L2 8l2 2M12 6l2 2-2 2" stroke-width="1.300"/>`,
  rotate: `<path d="M5 4a5 5 0 1 0 5-1L7 2M7 2l1 4" stroke-width="1.300"/>`,
  scale: `<path d="M3.500 2.500h10v10h-5" stroke="#2b83b5" fill="#c5e1ef"/><path d="M2.500 8.500h5v5h-5z" fill="#fff" />`,
  stretch: `<path d="M3.500 3.500h5v9h-5z"/><path d="M8.500 3h2l3 9.500h-5" stroke="#2b83b5"/><path d="M6 10h5M9 8l2 2-2 2"/>`,
  trim: `<path d="M2 8h4M10 8h4" /><path d="M9 3L6 13" stroke="#2b83b5"/><path d="M8 8h2" stroke-dasharray="1 1"/>`,
  extend: `<path d="M2 8h7" stroke-dasharray="3 1"/><path d="M13 3l-4 9" stroke="#2b83b5"/>`,
  brkpt: `<path d="M2.500 12V5M2 4.500h12M2 12.500h10"/><path d="M12 4v3" stroke="#2b83b5"/>`,
  brk: `<path d="M5 4.500H2.500v8h11v-8H11"/><path d="M5 3v4M11 3v4" stroke="#2b83b5" stroke-width="2"/>`,
  join: `<path d="M2 8h12" /><path d="M5 6l2 2-2 2zM11 6L9 8l2 2z" fill="#2b83b5" stroke="#2b83b5"/>`,
  chamfer: `<path d="M2.500 13V8l5-5.500h6V13z"/><path d="M2.500 8l5-5.500" stroke="#2b83b5"/>`,
  fillet: `<path d="M2.500 13V9c0-4 3-6 7-6.500h4V13z"/><path d="M2.500 9c0-4 3-6 7-6.500" stroke="#2b83b5"/>`,
  blend: `<path d="M2 13V9"/><path d="M2 9c1-6 4-5 5-1s4 4 6-3" stroke="#2b83b5"/><path d="M13 5V2"/>`,
  explode: `<path d="M2 8l4-3h2v7l-5 1zM7 5l3-2 4 1v6l-3 2H7zM9 6h4M10 6v6" stroke="#1f7396" fill="#8cc5dc"/>`,
  front: `<path d="M2.500 2.500h6v4h-6zM8.500 9.500h5v4h-5z" fill="#fff"/><path d="M5 5.500h6v5H5z" fill="#999"/>`,
  back: `<path d="M5 5.500h6v5H5z" fill="#999"/><path d="M2.500 2.500h6v4h-6zM8 9h5.500v4H8z" fill="#fff"/>`,
  above: `<path d="M2.500 3.500h8v5h-8z" fill="#fff"/><path d="M6 6.500h8v5H6z" fill="#aaa"/>`,
  under: `<path d="M6 7.500h8v5H6z" fill="#aaa"/><path d="M2.500 3.500h8v6h-8z" fill="#fff"/>`,
  textFront: `<path d="M2 6l1.500-4L5 6M7 2v4h2V4H7M13 2h-2v4h2M4 8v5h8M10 8H7" stroke="#333"/><path d="M12 14h2v-2z" fill="#111"/>`,
  hatchBack: `<path d="M2.500 3.500h8v7h-8z" fill="#999"/><path d="M12 5h2v7H6" stroke-dasharray="2 1"/>`,
  first: `<path d="M4 4v8"/>` + arrow('M12 4v8L6 8z'), prev: arrow('M10 4v8L5 8z'), next: arrow('M6 4v8l5-4z'), last: `<path d="M12 4v8"/>` + arrow('M4 4v8l6-4z'),
  sInfer: `<path d="M7 3v8M3 7h8M10 9v5M8 11h5" stroke-width="1.500"/>`,
  sSnap: `<path d="M3 4h9M3 7h9M3 10h9" stroke-dasharray="1 2"/><path d="M3 12.500h10v-9"/>`,
  sGrid: `<path d="M2 3h12M2 6h12M2 9h12M2 12h12M3 2v12M6 2v12M9 2v12M12 2v12"/>`,
  sOrtho: `<path d="M2 8h11V4" stroke="#2a6685" stroke-width="1.500"/>`,
  sPolar: `<circle cx="8" cy="9" r="4"/><path d="M6 11l6-7M8 9h5"/>`,
  sOsnap: `<path d="M4.500 5.500h9V14h-9z" fill="#fff"/><path d="M3 4h4v4H3z" fill="#3e91b7"/>`,
  s3d: `<path d="M5 3h8v8H9l-6 2 2-4z" fill="#fff"/><path d="M3 12h3v2H3z" stroke="#d88a36"/>`,
  sTrack: `<path d="M12 3L4 12h9" stroke-width="1.500"/>`,
  sUcs: `<path d="M3 3v9h10"/><path d="M4 12l8-9M9 6l4-3" stroke="#b88a2e" stroke-width="1.500"/>`,
  sDyn: `<path d="M6 4v8M2 8h8" stroke-width="1.700"/><path d="M8 9h6v3H8z" fill="#888"/>`,
  sLwt: `<path d="M8 3v10" /><path d="M2 8h12" stroke-width="2.500" stroke="#123"/>`,
  sTpy: `<path d="M3 3h11v10H3z" fill="#9cc8e4" stroke="#2e6f9c"/><path d="M4 7l4-4M4 11l8-8M8 12l5-5" stroke="#fff"/>`,
  sQp: `<path d="M5.500 4h5v8h-5zM4 4h8" stroke-width="1.500"/>`,
  sSc: `<path d="M5 3v5M2.500 5.500h5"/><path d="M6 5.500h6v5H6z" fill="#cbe4c4"/><path d="M8.500 8.500h6v5h-6z" fill="#69b25e" stroke="#2d7a2a"/>`,
  sPlus: `<path d="M6 2h4v4h4v4h-4v4H6v-4H2V6h4z" fill="#fff"/>`,
  sLay: `<path d="M3 3h10v10H3z" fill="#fff"/><path d="M6 5l4 4v-3M6 11h5"/>`,
  sView: `<path d="M2 3h5.500v5H2zM8.500 3H14v5H8.500zM2 10.500h12" fill="#fff" stroke-width="1.500"/>`,
  sAnno: person, sAnnoY: person + `<circle cx="12" cy="6" r="2.500" fill="#f5d24a" stroke="none"/>`, sAnnoG: `<g opacity=".5">${person}</g>`,
  sShield: `<path d="M3 5h10v4l-5 4-5-4z" fill="#999"/><path d="M5 5l3-2 3 2" fill="#ddd"/>`,
  tWall: `<path d="M1 5.500h14M1 10.500h14" stroke="#24527c" stroke-width="2"/>`,
  tDiv: `<path d="M1 4.500h14M2 4v9M6 4v9M10 4v9M14 4v9" stroke="#9b2c35" stroke-width="1.500"/><path d="M2 9h12" stroke="#9b2c35" stroke-dasharray="2 2"/>`,
  tLine: `<path d="M2 3h12" stroke="#222" stroke-width="2"/><path d="M8 5v5M6 8l2 2 2-2" stroke="#c22a2a"/><path d="M1 13h14" stroke="#2b6c9c" stroke-width="3"/>`,
  tSeg: `<path d="M1 6h7v5H1M15 5h-5v5h5" stroke="#24527c" stroke-width="1.500"/><path d="M8 3v6" stroke="#3b70b8" stroke-width="2"/>`,
  tCurt: `<path d="M2 3h12" stroke="#888" stroke-width="2"/><path d="M8 5v5M6 8l2 2 2-2" stroke="#c22a2a"/><path d="M2 13h12" stroke="#aa7070" stroke-width="2"/>`,
  tArc: `<path d="M2 15V9c0-4 3-6 7-6h7" stroke="#24527c" stroke-width="1.700"/><path d="M6 15v-4c0-3 2-4 5-4h5" stroke="#4a94c0" stroke-width="1.700"/>`,
  tCross: `<path d="M6 2v4H1M6 14v-4H1M10 2v4h5M10 14v-4h5M8 5v6M5 8h6" stroke="#444" stroke-width="1.500"/>`,
  tCrossR: `<path d="M6 2v4H1M10 14v-4h5" stroke="#222" stroke-width="1.500"/><path d="M8 3v10M3 8h10" stroke="#b02d4f" stroke-width="2"/>`,
  tEdge: `<path d="M3 2v8M1 10h14" stroke="#24527c" stroke-width="2"/><path d="M8 4v9M10 4h4v6" stroke="#a43264" stroke-width="2"/>`,
  tGap: `<path d="M2 2v12M14 2v12M5 2v12M11 2v12" stroke="#2b78a5"/><path d="M6 5l4 3-4 3z" fill="#2b78a5"/>`,
  tCol: `<path d="M1 12h14M3 12V3h3v6h9" stroke="#24527c" stroke-width="2"/>`,
  tShape: `<path d="M1 12h14M1 9h3V5h3v4h2V5h3v4h3" stroke="#24527c" stroke-width="1.300"/>`,
  tHouse: `<path d="M1 8l7-6 7 6M3 8v6h10V8" stroke="#96204f" stroke-width="1.500"/><path d="M8 13V7M6 9l2-2 2 2" stroke="#3468a8"/>`,
  tDouble: ppl('M0 5h16M0 11h16', '#444')
};
const hot = new Set(['sOrtho', 'sOsnap', 'sLwt', 'sTpy']);
const sizes = { large: 18, slim: 14 };
const draw = (name, px) => `<svg width="${px}" height="${px}" viewBox="0 0 16 16" fill="none" stroke="currentColor" aria-hidden="true">${G[name]}</svg>`;

for (const host of document.querySelectorAll('[data-icons]')) {
  const px = sizes[host.dataset.size] || 16;
  host.innerHTML = host.dataset.icons.split(' ').map((key) => {
    if (key === '|' || key === '-') return '<i class="sep"></i>';
    const cls = 'ib' + (key === 'caret' ? ' narrow' : '') + (hot.has(key) ? ' hot' : '');
    return `<button type="button" class="${cls}" aria-label="${key}">${draw(key, px)}</button>`;
  }).join('');
}
for (const host of document.querySelectorAll('[data-glyph]')) {
  host.insertAdjacentHTML('afterbegin', draw(host.dataset.glyph, 14));
}
```
